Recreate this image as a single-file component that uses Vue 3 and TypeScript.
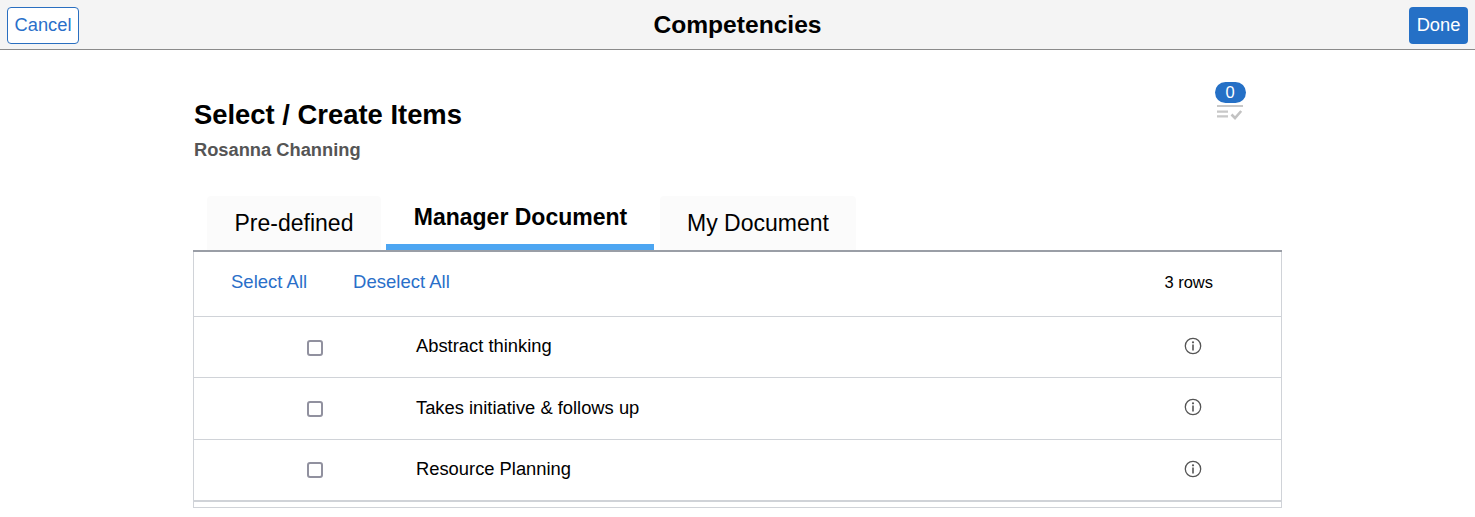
<script setup lang="ts">
const rows: string[] = ['Abstract thinking', 'Takes initiative & follows up', 'Resource Planning']
</script>

<template>
  <div class="page">
    <header class="top">
      <button class="btn cancel">Cancel</button>
      <h1>Competencies</h1>
      <button class="btn done">Done</button>
    </header>
    <main class="content">
      <div class="head">
        <div>
          <h2>Select / Create Items</h2>
          <div class="name">Rosanna Channing</div>
        </div>
        <div class="cart">
          <span class="badge">0</span>
          <svg class="cart-icon" width="28" height="18" viewBox="0 0 28 18">
            <path d="M1 2h26M1 7.700h11M1 12.300h11" stroke="#c8c8c8" stroke-width="2.200" fill="none" />
            <path d="M15.500 10.500l3.500 3.500 6.200-7" stroke="#c2c2c2" stroke-width="2.600" fill="none" />
          </svg>
        </div>
      </div>
      <nav class="tabs">
        <div class="tab t1">Pre-defined</div>
        <div class="tab active">Manager Document</div>
        <div class="tab t3">My Document</div>
      </nav>
      <section class="box">
        <div class="toolbar">
          <a class="l1">Select All</a>
          <a class="l2">Deselect All</a>
          <span class="count">3 rows</span>
        </div>
        <div v-for="r in rows" :key="r" class="row">
          <span class="check"></span>
          <span class="label">{{ r }}</span>
          <svg class="info" width="18" height="18" viewBox="0 0 18 18">
            <circle cx="9" cy="9" r="7.700" stroke="#555" stroke-width="1.300" fill="none" />
            <circle cx="9" cy="5.300" r="1.100" fill="#555" />
            <path d="M9 7.500v6" stroke="#555" stroke-width="1.600" />
          </svg>
        </div>
        <div class="foot"></div>
      </section>
    </main>
  </div>
</template>

<style scoped>
.page {
  width: 1475px;
  height: 517px;
  overflow: hidden;
  background: #fff;
  font-family: "Liberation Sans", Arial, sans-serif;
  color: #000;
}
.top {
  height: 49px;
  box-sizing: content-box;
  background: #f4f4f4;
  border-bottom: 1px solid #8a8a8a;
  display: flex;
  align-items: flex-start;
  justify-content: space-between;
  padding: 0 7px;
  position: relative;
}
.top h1 {
  position: absolute;
  left: 0;
  right: 0;
  top: 10px;
  margin: 0;
  text-align: center;
  font-size: 24.600px;
  line-height: 30px;
  font-weight: 700;
}
.btn {
  margin-top: 7px;
  height: 37px;
  border-radius: 4px;
  font-family: inherit;
  font-size: 18.300px;
  padding: 0 0 2px;
}
.cancel {
  width: 72px;
  background: #fff;
  color: #2a6fc9;
  border: 1px solid #2a6fc0;
}
.done {
  width: 59px;
  background: #2570c6;
  color: #fff;
  border: 0;
}
.content {
  width: 1089px;
  margin-left: 193px;
}
.head {
  height: 146px;
  display: flex;
  justify-content: space-between;
}
.head h2 {
  margin: 49px 0 0 1px;
  font-size: 27.400px;
  line-height: 32px;
  font-weight: 700;
}
.name {
  margin: 8px 0 0 1px;
  font-size: 18.300px;
  line-height: 22px;
  font-weight: 700;
  color: #555;
}
.cart {
  width: 32px;
  margin: 32px 36px 0 0;
  display: flex;
  flex-direction: column;
  align-items: center;
}
.badge {
  width: 31px;
  height: 21px;
  border-radius: 11px;
  background: #2570c6;
  color: #fff;
  font-size: 16.500px;
  line-height: 21px;
  text-align: center;
}
.cart-icon {
  margin-top: 1px;
}
.tabs {
  height: 54px;
  display: flex;
  align-items: flex-end;
  padding-left: 14px;
  border-bottom: 2px solid #9a9ea6;
}
.tab {
  height: 54px;
  box-sizing: border-box;
  font-size: 23px;
  text-align: center;
  background: #fbfbfb;
  border-radius: 4px 4px 0 0;
  padding-top: 13px;
  line-height: 28px;
}
.t1 { width: 174px; }
.active {
  width: 268px;
  margin: 0 6px 0 5px;
  background: #fff;
  font-weight: 700;
  padding-top: 7px;
  padding-left: 1px;
  border-bottom: 6px solid #4da6f2;
  border-radius: 0;
}
.t3 { width: 196px; }
.box {
  height: 256px;
  box-sizing: border-box;
  border: 1px solid #d0d3d8;
  border-top: 0;
  display: flex;
  flex-direction: column;
}
.toolbar {
  height: 65px;
  flex: none;
  border-bottom: 1px solid #d0d3d8;
  display: flex;
  align-items: center;
  font-size: 18.500px;
  padding-bottom: 4px;
  box-sizing: border-box;
}
.toolbar a { color: #2a6fc9; }
.l1 { margin-left: 37px; }
.l2 { margin-left: 46px; }
.count {
  margin-left: auto;
  margin-right: 68px;
  font-size: 16.500px;
}
.row {
  height: 61.300px;
  flex: none;
  box-sizing: border-box;
  border-bottom: 1px solid #d0d3d8;
  display: flex;
  align-items: center;
  font-size: 18.350px;
  padding-bottom: 1.500px;
}
.check {
  width: 16px;
  height: 16px;
  box-sizing: border-box;
  margin: 3px 0 0 113px;
  border: 2px solid #91919f;
  border-radius: 3px;
  background: #fff;
}
.label {
  margin-left: 93px;
  flex: 1;
}
.info {
  margin: 0 79px 0.500px 0;
}
.foot {
  flex: 1;
  border-top: 1px solid #d0d3d8;
}
</style>
